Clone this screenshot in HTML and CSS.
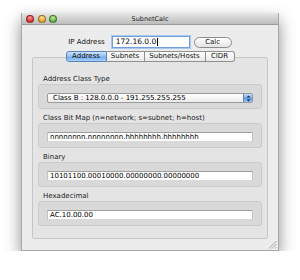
FILE: index.html
```html
<!doctype html>
<html lang="en">
<head>
    <meta charset="utf-8">
    <title>SubnetCalc</title>
    <link rel="stylesheet" href="styles.css">
</head>
<body>
    <div class="window">
        <div class="titlebar">
            <div class="lights">
                <span class="light close"></span>
                <span class="light minimize"></span>
                <span class="light zoom"></span>
            </div>
            <div class="title">SubnetCalc</div>
        </div>
        <div class="content">
            <div class="ip-row">
                <label class="ip-label">IP Address</label>
                <div class="ip-field">172.16.0.0<span class="caret"></span></div>
                <button class="calc">Calc</button>
            </div>
            <div class="tabs">
                <span class="tab active tab-address">Address</span>
                <span class="tab tab-subnets">Subnets</span>
                <span class="tab tab-hosts">Subnets/Hosts</span>
                <span class="tab tab-cidr">CIDR</span>
            </div>
            <div class="tab-box">
                <div class="section">
                    <div class="section-label">Address Class Type</div>
                    <div class="group">
                        <div class="popup">
                            <span>Class B : 128.0.0.0 - 191.255.255.255</span>
                            <span class="stepper">
                                <svg width="5" height="7" viewBox="0 0 5 7">
                                    <path d="M0.5 2.6 L2.5 0.6 L4.5 2.6 Z M0.5 4.4 L2.5 6.4 L4.5 4.4 Z" fill="#1d2a44"/>
                                </svg>
                            </span>
                        </div>
                    </div>
                </div>
                <div class="section">
                    <div class="section-label">Class Bit Map (n=network; s=subnet; h=host)</div>
                    <div class="group">
                        <div class="field">nnnnnnnn.nnnnnnnn.hhhhhhhh.hhhhhhhh</div>
                    </div>
                </div>
                <div class="section">
                    <div class="section-label">Binary</div>
                    <div class="group">
                        <div class="field">10101100.00010000.00000000.00000000</div>
                    </div>
                </div>
                <div class="section">
                    <div class="section-label">Hexadecimal</div>
                    <div class="group">
                        <div class="field">AC.10.00.00</div>
                    </div>
                </div>
            </div>
        </div>
        <svg class="grip" width="9" height="9" viewBox="0 0 9 9">
            <path d="M8.5 1 L1 8.5 M8.5 4 L4 8.5 M8.5 7 L7 8.5" stroke="#9a9a9a" stroke-width="0.8"/>
        </svg>
    </div>
</body>
</html>
```

FILE: styles.css
```css
* {
    margin: 0;
    padding: 0;
    box-sizing: border-box;
}

body {
    background: #ffffff;
    font-family: "DejaVu Sans", Verdana, sans-serif;
    font-size: 7px;
    color: #111111;
}

.window {
    position: relative;
    width: 258px;
    height: 238px;
    margin: 13px 0 0 21px;
    background: #ececec;
    border: 1px solid #a8a8a8;
    border-top: none;
    box-shadow: 0 7px 15px rgba(0, 0, 0, 0.45);
}

.titlebar {
    position: relative;
    height: 12px;
    background: linear-gradient(#e6e6e6, #bdbdbd);
    border-bottom: 1px solid #9c9c9c;
    display: flex;
    align-items: center;
    justify-content: center;
}

.lights {
    position: absolute;
    left: 4px;
    top: 2px;
    display: flex;
    gap: 3.5px;
}

.light {
    width: 8px;
    height: 8px;
    border-radius: 50%;
    border: 0.5px solid rgba(0, 0, 0, 0.35);
}

.close {
    background: radial-gradient(circle at 50% 30%, #f8a09a, #d8322b 70%);
}

.minimize {
    background: radial-gradient(circle at 50% 30%, #fbe2a0, #e6a126 70%);
}

.zoom {
    background: radial-gradient(circle at 50% 30%, #c8efa7, #58ae37 70%);
}

.title {
    font-size: 6.5px;
    color: #1f1f1f;
}

.content {
    padding: 11px 10px 12px;
}

.ip-row {
    display: flex;
    align-items: center;
    justify-content: center;
    height: 12px;
}

.ip-label {
    margin-right: 7px;
}

.ip-field {
    width: 78px;
    height: 12px;
    background: #ffffff;
    border: 1px solid #6f9fdc;
    box-shadow: 0 0 0 1px #a8c8f0;
    padding-left: 3px;
    font-size: 7.5px;
    line-height: 10px;
    color: #000000;
    display: flex;
    align-items: center;
}

.caret {
    display: inline-block;
    width: 1px;
    height: 8px;
    background: #000000;
    margin-left: 1px;
}

.calc {
    width: 38px;
    height: 11px;
    margin-left: 4px;
    border: 1px solid #8c8c8c;
    border-radius: 6px;
    background: linear-gradient(#ffffff, #e4e4e4);
    font-family: inherit;
    font-size: 7px;
    color: #111111;
}

.tabs {
    position: relative;
    z-index: 1;
    display: flex;
    justify-content: center;
    height: 11px;
    margin-top: 3px;
}

.tab {
    height: 11px;
    line-height: 9px;
    text-align: center;
    border: 1px solid #909090;
    border-left: none;
    background: linear-gradient(#ffffff, #e8e8e8);
}

.tab:first-child {
    border-left: 1px solid #909090;
    border-radius: 3px 0 0 3px;
}

.tab:last-child {
    border-radius: 0 3px 3px 0;
}

.tab.active {
    background: linear-gradient(#d2e5fb, #8fbdf2 50%, #6ba6ec 51%, #a8d0f8);
    border-color: #5b84bd;
}

.tab-address {
    width: 41px;
}

.tab-subnets {
    width: 38px;
}

.tab-hosts {
    width: 61px;
}

.tab-cidr {
    width: 29px;
}

.tab-box {
    margin-top: -5px;
    height: 182px;
    background: #e4e4e4;
    border: 1px solid #c6c6c6;
    border-radius: 2px;
    padding: 16px 5px 13px;
    display: flex;
    flex-direction: column;
    gap: 4px;
}

.section-label {
    height: 10px;
    line-height: 10px;
    padding-left: 5px;
    color: #222222;
}

.group {
    height: 25px;
    background: #d9d9d9;
    border: 1px solid #cbcbcb;
    border-radius: 3px;
    padding: 8px 8px 5px;
}

.field {
    height: 10px;
    background: #ffffff;
    border-top: 1px solid #9e9e9e;
    border-left: 1px solid #c4c4c4;
    border-right: 1px solid #c4c4c4;
    border-bottom: 1px solid #d8d8d8;
    padding-left: 2px;
    line-height: 8px;
    font-size: 7px;
    color: #000000;
    white-space: nowrap;
    overflow: hidden;
}

.popup {
    height: 10px;
    display: flex;
    justify-content: space-between;
    align-items: center;
    background: linear-gradient(#ffffff, #ececec);
    border: 1px solid #9a9a9a;
    border-radius: 2px;
    padding-left: 5px;
    font-size: 7px;
    color: #000000;
    overflow: hidden;
}

.stepper {
    width: 10px;
    height: 10px;
    margin-right: -1px;
    display: flex;
    align-items: center;
    justify-content: center;
    background: linear-gradient(#c6ddfa, #74aaee 50%, #5b97e6 51%, #9cc8f6);
    border: 1px solid #5b84bd;
    border-radius: 0 2px 2px 0;
}

.grip {
    position: absolute;
    right: 1px;
    bottom: 1px;
}
```
